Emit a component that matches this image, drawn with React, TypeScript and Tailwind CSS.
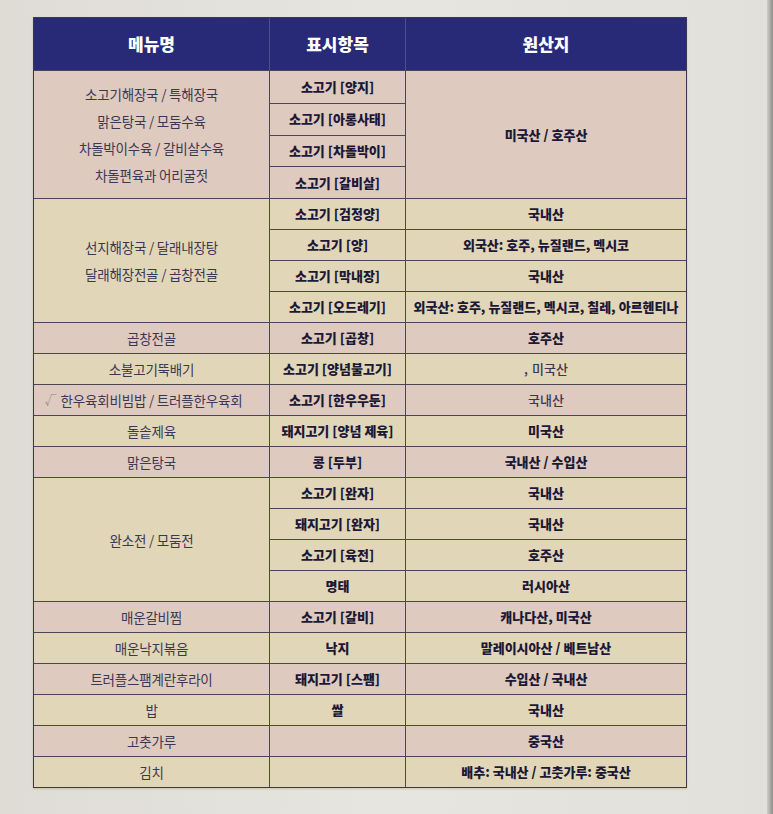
import React from 'react';

type Row = { item: string; origin?: string; light?: boolean };
type Group = {
  menu: string[];
  tone: 'pink' | 'beige';
  rows: Row[];
  merged?: string;
};

const groups: Group[] = [
  {
    menu: ['소고기해장국 / 특해장국', '맑은탕국 / 모둠수육', '차돌박이수육 / 갈비살수육', '차돌편육과 어리굴젓'],
    tone: 'pink',
    rows: [{ item: '소고기 [양지]' }, { item: '소고기 [아롱사태]' }, { item: '소고기 [차돌박이]' }, { item: '소고기 [갈비살]' }],
    merged: '미국산 / 호주산',
  },
  {
    menu: ['선지해장국 / 달래내장탕', '달래해장전골 / 곱창전골'],
    tone: 'beige',
    rows: [
      { item: '소고기 [검정양]', origin: '국내산' },
      { item: '소고기 [양]', origin: '외국산: 호주, 뉴질랜드, 멕시코' },
      { item: '소고기 [막내장]', origin: '국내산' },
      { item: '소고기 [오드레기]', origin: '외국산: 호주, 뉴질랜드, 멕시코, 칠레, 아르헨티나' },
    ],
  },
  { menu: ['곱창전골'], tone: 'pink', rows: [{ item: '소고기 [곱창]', origin: '호주산' }] },
  { menu: ['소불고기뚝배기'], tone: 'beige', rows: [{ item: '소고기 [양념불고기]', origin: '미국산', light: true }] },
  { menu: ['한우육회비빔밥 / 트러플한우육회'], tone: 'pink', rows: [{ item: '소고기 [한우우둔]', origin: '국내산', light: true }] },
  { menu: ['돌솥제육'], tone: 'beige', rows: [{ item: '돼지고기 [양념 제육]', origin: '미국산' }] },
  { menu: ['맑은탕국'], tone: 'pink', rows: [{ item: '콩 [두부]', origin: '국내산 / 수입산' }] },
  {
    menu: ['완소전 / 모둠전'],
    tone: 'beige',
    rows: [
      { item: '소고기 [완자]', origin: '국내산' },
      { item: '돼지고기 [완자]', origin: '국내산' },
      { item: '소고기 [육전]', origin: '호주산' },
      { item: '명태', origin: '러시아산' },
    ],
  },
  { menu: ['매운갈비찜'], tone: 'pink', rows: [{ item: '소고기 [갈비]', origin: '캐나다산, 미국산' }] },
  { menu: ['매운낙지볶음'], tone: 'beige', rows: [{ item: '낙지', origin: '말레이시아산 / 베트남산' }] },
  { menu: ['트러플스팸계란후라이'], tone: 'pink', rows: [{ item: '돼지고기 [스팸]', origin: '수입산 / 국내산' }] },
  { menu: ['밥'], tone: 'beige', rows: [{ item: '쌀', origin: '국내산' }] },
  { menu: ['고춧가루'], tone: 'pink', rows: [{ item: '', origin: '중국산' }] },
  { menu: ['김치'], tone: 'beige', rows: [{ item: '', origin: '배추: 국내산 / 고춧가루: 중국산' }] },
];

const font = { fontFamily: '"Noto Sans CJK KR", "Noto Sans", sans-serif' };

function MenuCell({ lines }: { lines: string[] }) {
  const check = lines[0].startsWith('한우육회');
  return (
    <div className="w-[236px] shrink-0 border-r border-[#4b4556] flex flex-col items-center justify-center gap-[9px] text-[13.5px] text-[#3b3853] leading-[18px] tracking-[-0.2px]">
      {lines.map((l) => (
        <div key={l} className="relative">
          {check && <span className="absolute -left-[16px] top-0 text-[#8a8590] text-[12px]">√</span>}
          {l}
        </div>
      ))}
    </div>
  );
}

function GroupRow({ g, first }: { g: Group; first: boolean }) {
  const bg = g.tone === 'pink' ? 'bg-[#dfcac0]' : 'bg-[#e2d6b9]';
  return (
    <div className={`flex ${bg} ${first ? '' : 'border-t border-[#4b4556]'}`}>
      <MenuCell lines={g.menu} />
      {g.merged ? (
        <>
          <div className="w-[136px] shrink-0 border-r border-[#4b4556] flex flex-col">
            {g.rows.map((r, i) => (
              <div
                key={r.item}
                className={`h-[31.75px] flex items-center justify-center font-black text-[13px] text-[#1b1936] ${i ? 'border-t border-[#4b4556]' : ''}`}
              >
                {r.item}
              </div>
            ))}
          </div>
          <div className="flex-1 flex items-center justify-center font-black text-[13px] text-[#1b1936]">{g.merged}</div>
        </>
      ) : (
        <div className="flex-1 flex flex-col">
          {g.rows.map((r, i) => (
            <div key={r.item + i} className={`flex ${i ? 'h-[31px] border-t border-[#4b4556]' : 'h-[30px]'}`}>
              <div className="w-[136px] shrink-0 border-r border-[#4b4556] flex items-center justify-center font-black text-[13px] text-[#1b1936]">
                {r.item}
              </div>
              <div
                className={`flex-1 flex items-center justify-center text-[13px] ${
                  r.light ? 'font-medium text-[#3b3853]' : 'font-black text-[#1b1936]'
                }`}
              >
                {r.item === '소고기 [양념불고기]' && <span className="mr-[4px] text-[#3b3853]">,</span>}
                {r.origin}
              </div>
            </div>
          ))}
        </div>
      )}
    </div>
  );
}

export default function App() {
  return (
    <div
      className="w-[773px] h-[814px] overflow-hidden bg-gradient-to-r from-[#dedcd5] via-[#e6e5df] to-[#e1e0da] flex"
      style={font}
    >
      <div className="pl-[33px] pt-[17px] w-[687px] shrink-0">
        <div className="border border-[#3d3850] shadow-[0_1px_2px_rgba(0,0,0,0.15)]">
          {/* header */}
          <div className="flex h-[52px] bg-[#282a78] text-white font-black text-[17px]">
            <div className="w-[236px] shrink-0 border-r border-[#4b4f8a] flex items-center justify-center">메뉴명</div>
            <div className="w-[136px] shrink-0 border-r border-[#4b4f8a] flex items-center justify-center">표시항목</div>
            <div className="flex-1 flex items-center justify-center">원산지</div>
          </div>
          <div className="border-t border-[#4b4556]">
            {groups.map((g, i) => (
              <GroupRow key={i} g={g} first={i === 0} />
            ))}
          </div>
        </div>
      </div>
      <div className="flex-1" />
      <div className="w-[6px] bg-gradient-to-r from-[#cfcec8] to-[#8f8e8a]" />
    </div>
  );
}
